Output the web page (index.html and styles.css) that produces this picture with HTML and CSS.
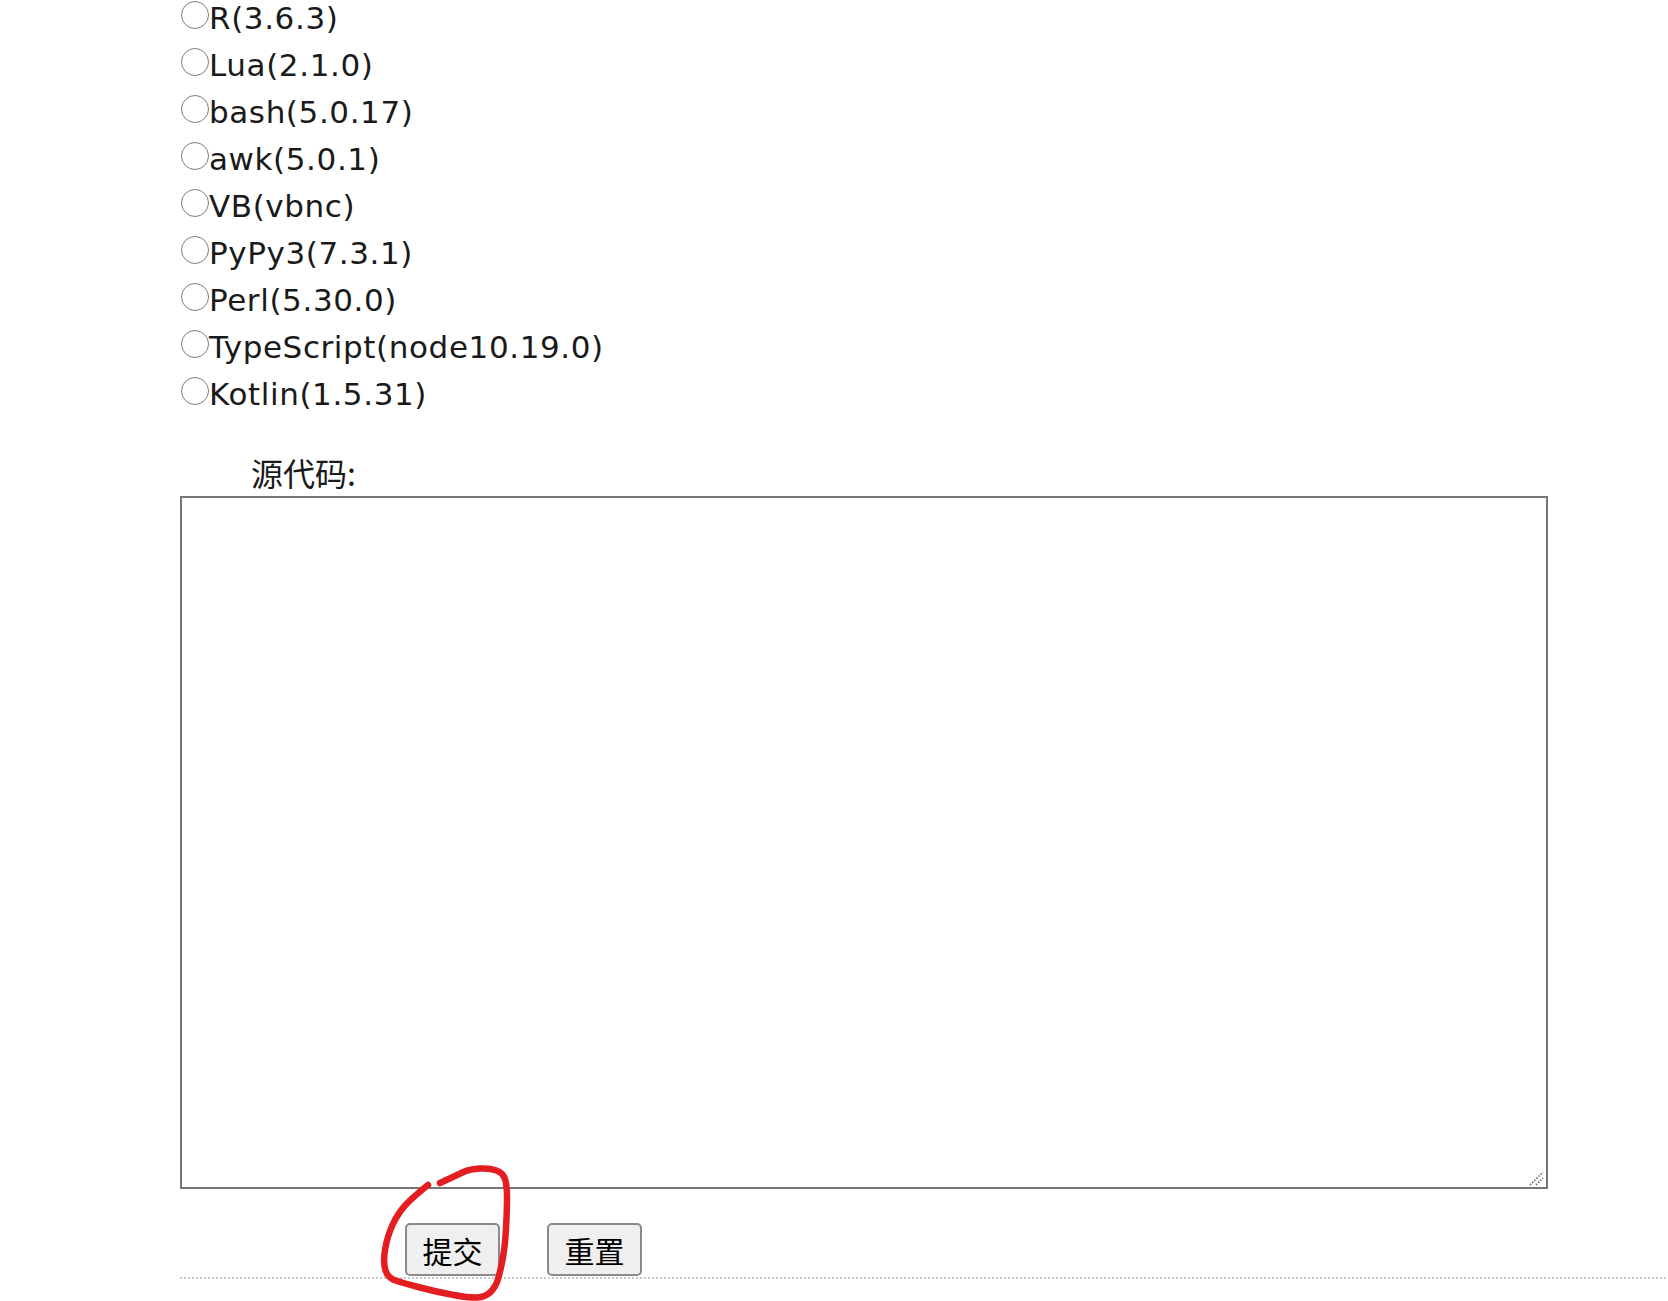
FILE: index.html
```html
<!DOCTYPE html>
<html lang="zh-CN">
<head>
<meta charset="utf-8">
<title>提交代码</title>
<link rel="stylesheet" href="styles.css">
</head>
<body>
<form class="page">
  <div class="langs">
    <label class="lang"><input type="radio" name="lang" class="radio"><span class="lang-name">R(3.6.3)</span></label>
    <label class="lang"><input type="radio" name="lang" class="radio"><span class="lang-name">Lua(2.1.0)</span></label>
    <label class="lang"><input type="radio" name="lang" class="radio"><span class="lang-name">bash(5.0.17)</span></label>
    <label class="lang"><input type="radio" name="lang" class="radio"><span class="lang-name">awk(5.0.1)</span></label>
    <label class="lang"><input type="radio" name="lang" class="radio"><span class="lang-name">VB(vbnc)</span></label>
    <label class="lang"><input type="radio" name="lang" class="radio"><span class="lang-name">PyPy3(7.3.1)</span></label>
    <label class="lang"><input type="radio" name="lang" class="radio"><span class="lang-name">Perl(5.30.0)</span></label>
    <label class="lang"><input type="radio" name="lang" class="radio"><span class="lang-name">TypeScript(node10.19.0)</span></label>
    <label class="lang"><input type="radio" name="lang" class="radio"><span class="lang-name">Kotlin(1.5.31)</span></label>
  </div>
  <div class="source-label">源代码:</div>
  <div class="editor">
    <textarea class="code"></textarea>
    <svg class="grip" width="18" height="18" viewBox="0 0 18 18">
      <line x1="2" y1="16" x2="15" y2="3" />
      <line x1="8" y1="16" x2="15" y2="9" />
    </svg>
  </div>
  <div class="actions">
    <button type="button" class="btn">提交</button>
    <button type="reset" class="btn">重置</button>
  </div>
  <div class="rule"></div>
</form>
<svg class="annotation" viewBox="0 0 1668 1301" width="1668" height="1301">
  <path d="M 440 1183 Q 457 1175 463.5 1172 Q 470 1169 480 1168.5 Q 490 1168 496.5 1170.5 Q 503 1173 505 1179 Q 507 1185 507 1197.5 Q 507 1210 506 1228.5 Q 505 1247 502.5 1260 Q 500 1273 497.5 1280.5 Q 495 1288 490 1292.5 Q 485 1297 477.5 1297.5 Q 470 1298 453.5 1295 Q 437 1292 420 1287.5 Q 403 1283 395.5 1280.5 Q 388 1278 385.5 1270.5 Q 383 1263 385 1250 Q 387 1237 392.5 1225 Q 398 1213 405.5 1205 Q 413 1197 428 1185" />
</svg>
</body>
</html>
```

FILE: styles.css
```css
html, body {
  margin: 0;
  padding: 0;
  background: #ffffff;
}

body {
  position: relative;
  font-family: "DejaVu Sans", Verdana, "Noto Sans CJK SC", sans-serif;
  color: #1a1a1a;
  overflow: hidden;
  height: 1301px;
}

.page {
  margin: -10px 0 0 0;
  padding-left: 180px;
  display: flex;
  flex-direction: column;
}

.langs {
  display: flex;
  flex-direction: column;
}

.lang {
  display: flex;
  align-items: center;
  height: 47px;
  font-size: 31px;
  letter-spacing: 0.6px;
}

.radio {
  appearance: none;
  -webkit-appearance: none;
  width: 28px;
  height: 28px;
  margin: 2px 0 0 1px;
  border: 1.5px solid #7d7d7d;
  border-radius: 50%;
  background: #fff;
  box-sizing: border-box;
  flex: none;
}

.lang-name {
  line-height: 47px;
  padding-top: 10px;
}

.source-label {
  margin-top: 41px;
  padding-left: 71px;
  height: 36px;
  line-height: 36px;
  font-family: "Noto Sans CJK SC", sans-serif;
  font-size: 32px;
  color: #1a1a1a;
}

.editor {
  position: relative;
  margin-top: 6px;
  width: 1368px;
  height: 693px;
}

.code {
  display: block;
  width: 100%;
  height: 100%;
  box-sizing: border-box;
  border: 2px solid #767676;
  border-radius: 0;
  margin: 0;
  padding: 4px;
  resize: none;
  outline: none;
  background: #fff;
}

.grip {
  position: absolute;
  right: 2px;
  bottom: 2px;
  stroke: #5f5f5f;
  stroke-width: 1.5;
  stroke-dasharray: 1.5 1.5;
}

.actions {
  display: flex;
  gap: 47px;
  margin-top: 34px;
  padding-left: 225px;
}

.btn {
  width: 95px;
  height: 53px;
  box-sizing: border-box;
  padding: 0;
  margin: 0;
  border: 2px solid #8a8a8a;
  border-radius: 5px;
  background: #efefef;
  font-family: "Noto Sans CJK SC", sans-serif;
  font-size: 30px;
  line-height: 1;
  color: #000;
}

.rule {
  margin-top: 1px;
  height: 2px;
  background: repeating-linear-gradient(to right, #c8c8c8 0 2px, transparent 2px 4px);
}

.annotation {
  position: absolute;
  left: 0;
  top: 0;
  pointer-events: none;
  fill: none;
  stroke: #e41e20;
  stroke-width: 6.5;
  stroke-linecap: round;
  stroke-linejoin: round;
}
```
